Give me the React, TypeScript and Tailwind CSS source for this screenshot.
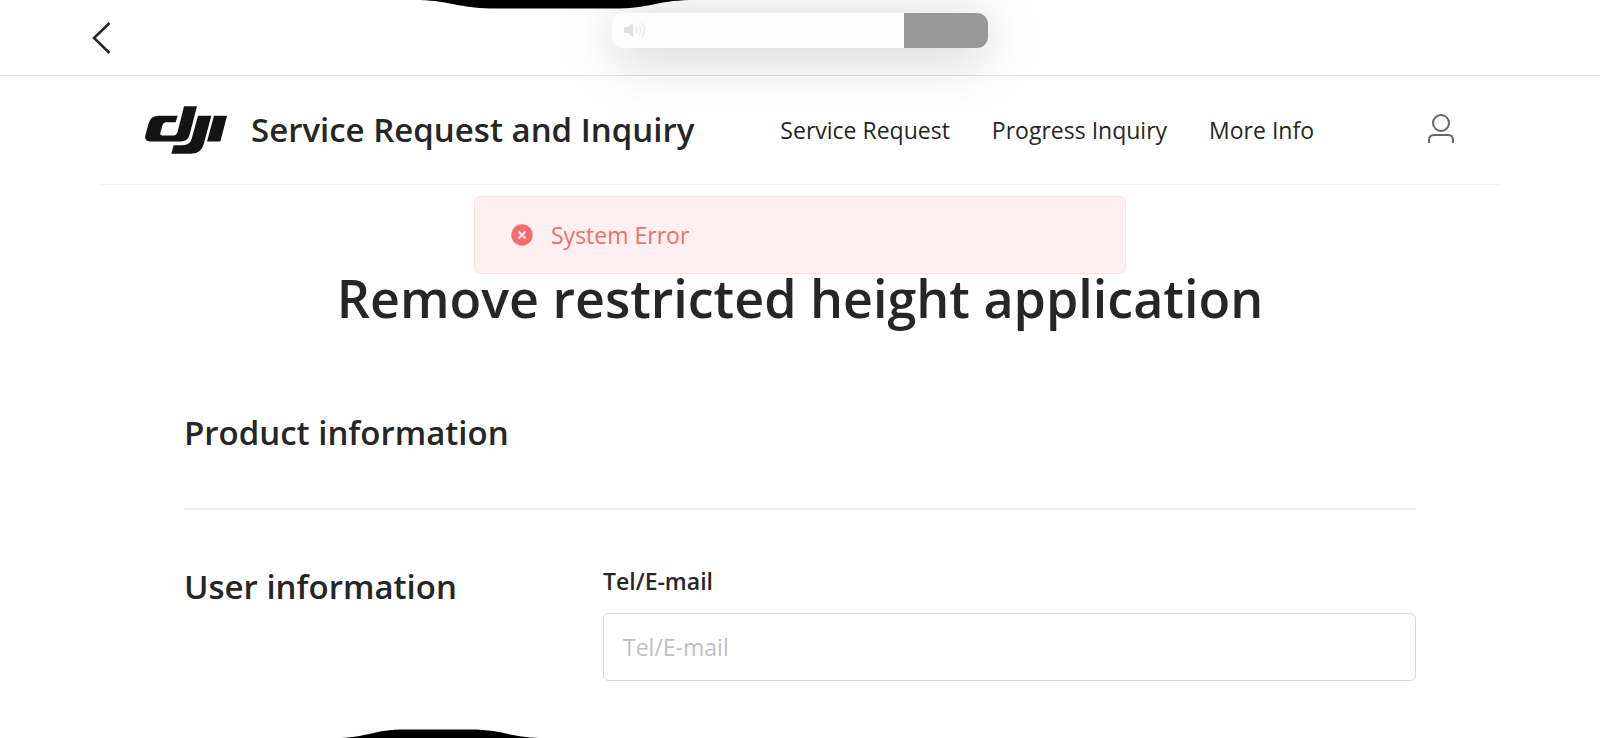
import { useState } from "react"

const navLinks = [
  { label: "Service Request", href: "#request" },
  { label: "Progress Inquiry", href: "#progress" },
  { label: "More Info", href: "#info" },
]

function DjiLogo() {
  return (
    <svg viewBox="0 0 246 143" className="w-[82px] h-12 shrink-0" fill="#141414" role="img" aria-label="DJI">
      <path d="M117 0H156L134 85Q129 106 106 106H17Q-3 106 1 88L10 54Q16 29 42 29H98L92 48H63Q55 48 53 56L46 80Q44 88 52 88H85Q95 88 98 77Z" />
      <path d="M159 29H199L177 111Q169 143 138 143H79L86 117H113Q135 117 140 98Z" />
      <path d="M207 29H246L226 106H186Z" />
    </svg>
  )
}

function UserIcon() {
  return (
    <svg viewBox="0 0 26 30" className="w-[26px] h-[30px]" fill="none" stroke="#66666b" strokeWidth="2">
      <circle cx="13" cy="9" r="8" />
      <path d="M1 29V26Q1 21 6 21H20Q25 21 25 26V29" />
    </svg>
  )
}

function VolumeBar() {
  const [volume, setVolume] = useState(292)

  return (
    <div className="absolute top-[13px] left-1/2 -translate-x-1/2 w-[376px] h-[35px] rounded-[11px] shadow-[0_8px_56px_rgba(0,0,0,0.22)]">
      <input
        type="range"
        aria-label="Volume"
        min={0}
        max={376}
        value={volume}
        onChange={(e) => setVolume(Number(e.target.value))}
        className="block w-full h-full appearance-none rounded-[11px] [&::-webkit-slider-thumb]:appearance-none [&::-webkit-slider-thumb]:opacity-0"
        style={{
          background: `linear-gradient(to right, #fcfcfc ${(volume / 376) * 100}%, #989898 ${(volume / 376) * 100}%)`,
        }}
      />
      <svg viewBox="0 0 22 16" className="absolute left-3 top-[9px] w-[22px] h-4 pointer-events-none" fill="none">
        <path d="M1 5H4L9 1V15L4 11H1Q0 11 0 10V6Q0 5 1 5Z" fill="#e0e0e0" />
        <path d="M12 5Q14 8 12 11M15 3Q18 8 15 13M18 1Q23 8 18 15" stroke="#ebebeb" strokeWidth="1.5" />
      </svg>
    </div>
  )
}

function ErrorToast() {
  return (
    <div
      role="alert"
      className="absolute top-[196px] left-1/2 -translate-x-1/2 w-[652px] max-w-full h-[78px] px-9 flex items-center gap-[18px] rounded-md border border-[#fde2e2] bg-[#fef0f0] text-[#f56c6c]"
    >
      <svg viewBox="0 0 22 22" className="w-[22px] h-[22px]">
        <circle cx="11" cy="11" r="10.7" fill="#f56c6c" />
        <path d="M7.5 7.5L14.5 14.5M14.5 7.5L7.5 14.5" stroke="#fef0f0" strokeWidth="2" />
      </svg>
      <p className="text-[23px] leading-8">System Error</p>
    </div>
  )
}

export default function App() {
  return (
    <div className="relative min-h-screen overflow-hidden bg-white text-[#262626] font-['Open_Sans','Noto_Sans',sans-serif]">
      <div className="h-[76px] border-b border-[#e3e3e3] px-[92px] flex items-center">
        <button type="button" aria-label="Back">
          <svg viewBox="0 0 20 32" className="w-5 h-8" fill="none" stroke="#262626" strokeWidth="2.5">
            <path d="M17.500 1L2 16L17.500 31" />
          </svg>
        </button>
      </div>

      <header className="mx-[101px] h-[109px] pl-11 pr-[45px] border-b border-[#f2f2f2] flex items-center">
        <DjiLogo />
        <p className="ml-6 text-[33px] font-semibold whitespace-nowrap">Service Request and Inquiry</p>
        <nav className="ml-auto mr-[114px] flex gap-[42px] text-[23px] whitespace-nowrap">
          {navLinks.map((link) => (
            <a key={link.label} href={link.href}>
              {link.label}
            </a>
          ))}
        </nav>
        <button type="button" aria-label="Account" className="pb-0.5">
          <UserIcon />
        </button>
      </header>

      <main className="px-[184px]">
        <h1 className="pt-[75px] text-center text-[52px] leading-[76px] font-semibold">
          Remove restricted height application
        </h1>

        <section className="pt-[73px] pb-[51px] border-b-2 border-[#f0f0f0]">
          <h2 className="text-[33px] leading-[48px] font-semibold">Product information</h2>
        </section>

        <section className="pt-[53px] pb-14 flex">
          <h2 className="w-[419px] shrink-0 text-[33px] leading-[48px] font-semibold">User information</h2>
          <div className="flex-1">
            <label htmlFor="contact" className="block text-[23px] leading-9 font-semibold">
              Tel/E-mail
            </label>
            <input
              id="contact"
              type="text"
              placeholder="Tel/E-mail"
              className="mt-[14px] block w-full h-[68px] px-[19px] rounded-md border border-[#d9d9d9] text-[23px] placeholder:text-[#bfbfbf]"
            />
          </div>
        </section>
      </main>

      <VolumeBar />
      <ErrorToast />

      <svg viewBox="0 0 270 9" className="absolute top-0 left-[420px] w-[270px] h-[9px]">
        <path d="M0 0C30 1 40 8 70 8.500H200C230 8 235 1 270 0Z" fill="#000" />
      </svg>
      <svg viewBox="0 0 200 9" className="absolute bottom-0 left-[340px] w-[200px] h-[9px]">
        <path d="M0 9C30 8 32 0.500 66 0.500H130C163 0.500 168 8 200 9Z" fill="#000" />
      </svg>
    </div>
  )
}
